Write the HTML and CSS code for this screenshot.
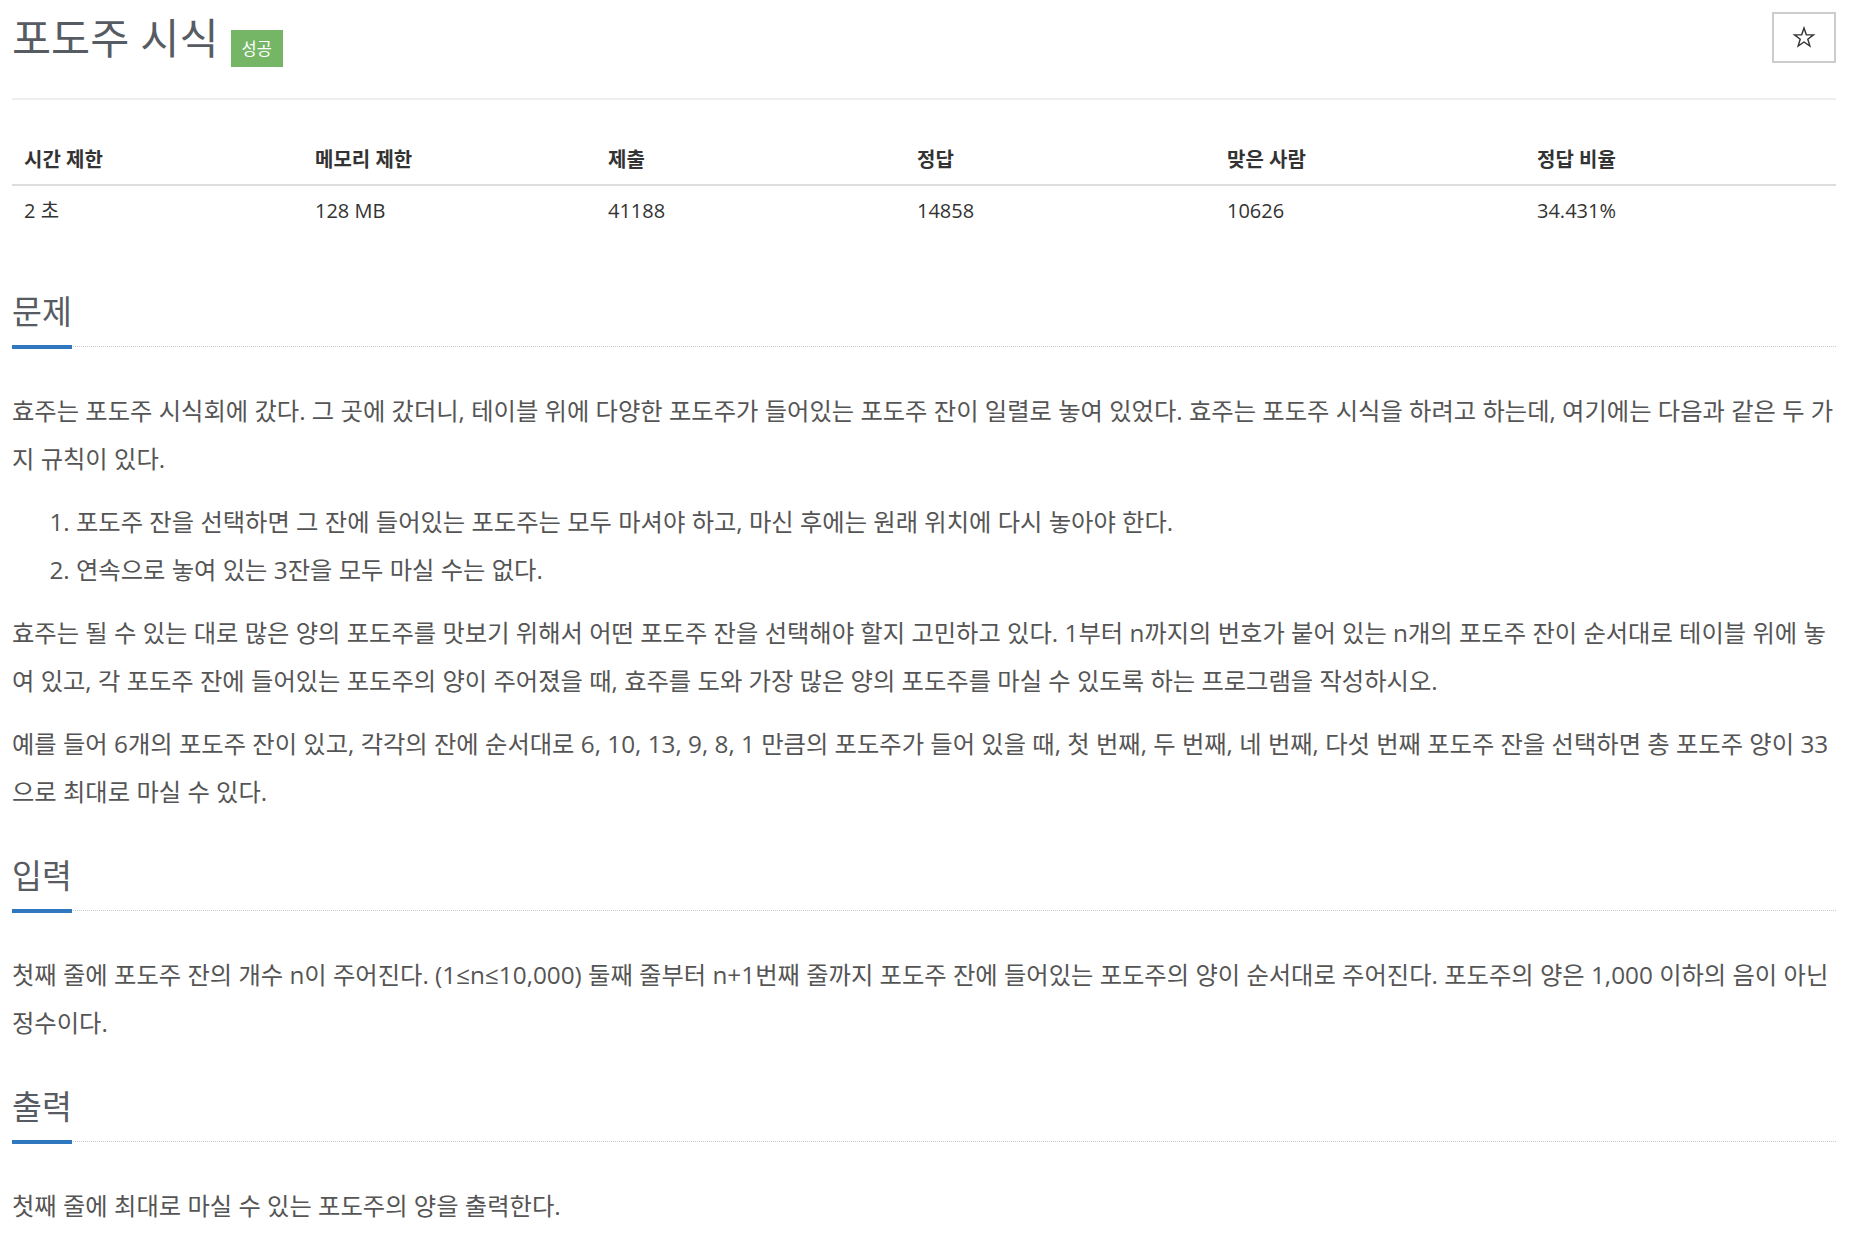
FILE: index.html
```html
<!DOCTYPE HTML>
<html lang="ko">
<head>
<meta charset="utf-8">
<meta name="viewport" content="width=device-width, initial-scale=1">
<title>포도주 시식</title>
<link rel="stylesheet" href="styles.css">
</head>
<body>

<div class="container">
  <div class="page-header">
    <div class="title-wrap">
      <h1 class="problem-title">포도주 시식</h1>
      <span class="label-success">성공</span>
    </div>
    <button class="star-button" type="button" aria-label="즐겨찾기">
      <svg width="24" height="24" viewBox="0 0 24 24">
        <polygon points="12,2 14.35,8.76 21.51,8.91 15.8,13.24 17.88,20.09 12,16 6.12,20.09 8.2,13.24 2.49,8.91 9.65,8.76" fill="none" stroke="#333" stroke-width="1.4" stroke-linejoin="miter"/>
      </svg>
    </button>
  </div>

  <table class="problem-info">
    <thead>
      <tr>
        <th>시간 제한</th>
        <th>메모리 제한</th>
        <th>제출</th>
        <th>정답</th>
        <th>맞은 사람</th>
        <th>정답 비율</th>
      </tr>
    </thead>
    <tbody>
      <tr>
        <td>2 초</td>
        <td>128 MB</td>
        <td>41188</td>
        <td>14858</td>
        <td>10626</td>
        <td>34.431%</td>
      </tr>
    </tbody>
  </table>

  <section class="problem-section">
    <div class="headline"><h2>문제</h2></div>
    <div class="problem-text">
      <p>효주는 포도주 시식회에 갔다. 그 곳에 갔더니, 테이블 위에 다양한 포도주가 들어있는 포도주 잔이 일렬로 놓여 있었다. 효주는 포도주 시식을 하려고 하는데, 여기에는 다음과 같은 두 가지 규칙이 있다.</p>
      <ol>
        <li>포도주 잔을 선택하면 그 잔에 들어있는 포도주는 모두 마셔야 하고, 마신 후에는 원래 위치에 다시 놓아야 한다.</li>
        <li>연속으로 놓여 있는 3잔을 모두 마실 수는 없다.</li>
      </ol>
      <p>효주는 될 수 있는 대로 많은 양의 포도주를 맛보기 위해서 어떤 포도주 잔을 선택해야 할지 고민하고 있다. 1부터 n까지의 번호가 붙어 있는 n개의 포도주 잔이 순서대로 테이블 위에 놓여 있고, 각 포도주 잔에 들어있는 포도주의 양이 주어졌을 때, 효주를 도와 가장 많은 양의 포도주를 마실 수 있도록 하는 프로그램을 작성하시오.</p>
      <p>예를 들어 6개의 포도주 잔이 있고, 각각의 잔에 순서대로 6, 10, 13, 9, 8, 1 만큼의 포도주가 들어 있을 때, 첫 번째, 두 번째, 네 번째, 다섯 번째 포도주 잔을 선택하면 총 포도주 양이 33으로 최대로 마실 수 있다.</p>
    </div>
  </section>

  <section class="problem-section">
    <div class="headline"><h2>입력</h2></div>
    <div class="problem-text">
      <p>첫째 줄에 포도주 잔의 개수 n이 주어진다. (1≤n≤10,000) 둘째 줄부터 n+1번째 줄까지 포도주 잔에 들어있는 포도주의 양이 순서대로 주어진다. 포도주의 양은 1,000 이하의 음이 아닌 정수이다.</p>
    </div>
  </section>

  <section class="problem-section">
    <div class="headline"><h2>출력</h2></div>
    <div class="problem-text">
      <p>첫째 줄에 최대로 마실 수 있는 포도주의 양을 출력한다.</p>
    </div>
  </section>
</div>

</body>
</html>
```

FILE: styles.css
```css
/* Base */
body {
  margin: 0;
  background: #ffffff;
  color: #555555;
  font-family: 'Open Sans', 'Noto Sans CJK KR', sans-serif;
}

.container {
  padding: 0 14px 0 12px;
}

/* Title row */
.page-header {
  display: flex;
  justify-content: space-between;
  align-items: flex-start;
  padding-top: 12px;
  height: 86px;
  border-bottom: 2px solid #eeeeee;
}

.title-wrap {
  display: flex;
  align-items: flex-start;
}

.problem-title {
  margin: 2px 0 0 0;
  font-size: 42.5px;
  line-height: 48px;
  font-weight: normal;
  color: #575c63;
}

.label-success {
  margin: 18px 0 0 12px;
  padding: 0 11px;
  height: 37px;
  line-height: 37px;
  font-size: 16.5px;
  color: #ffffff;
  background-color: #74b566;
}

.star-button {
  width: 64px;
  height: 51px;
  margin: 0;
  padding: 0;
  border: 2px solid #cccccc;
  background: #ffffff;
  display: flex;
  align-items: center;
  justify-content: center;
  cursor: pointer;
}

/* Limits table */
.problem-info {
  width: 100%;
  margin: 35px 0 32px 0;
  border-collapse: collapse;
  table-layout: fixed;
  color: #333333;
  font-size: 20px;
}

.problem-info th,
.problem-info td {
  padding: 11px 12px;
  line-height: 27px;
  text-align: left;
}

.problem-info th {
  font-weight: bold;
  border-bottom: 2px solid #dddddd;
}

.problem-info th:nth-child(1) { width: 267px; }
.problem-info th:nth-child(2) { width: 269px; }
.problem-info th:nth-child(3) { width: 285px; }
.problem-info th:nth-child(4) { width: 286px; }
.problem-info th:nth-child(5) { width: 286px; }

/* Sections */
.problem-section {
  padding-top: 25px;
}

.headline {
  display: flex;
  border-bottom: 1px dotted #cccccc;
}

.headline h2 {
  margin: 0 0 -3px 0;
  padding-bottom: 13px;
  font-size: 32.5px;
  line-height: 40px;
  font-weight: normal;
  color: #575c63;
  border-bottom: 4px solid #2f78c0;
}

.problem-text {
  padding-top: 40px;
  font-size: 24.3px;
  line-height: 47.5px;
}

.problem-text p {
  margin: 0 0 16px 0;
}

.problem-text ol {
  margin: 0 0 16px 0;
  padding-left: 64px;
}

.problem-section:last-child .problem-text p:last-child {
  margin-bottom: 0;
}
```
